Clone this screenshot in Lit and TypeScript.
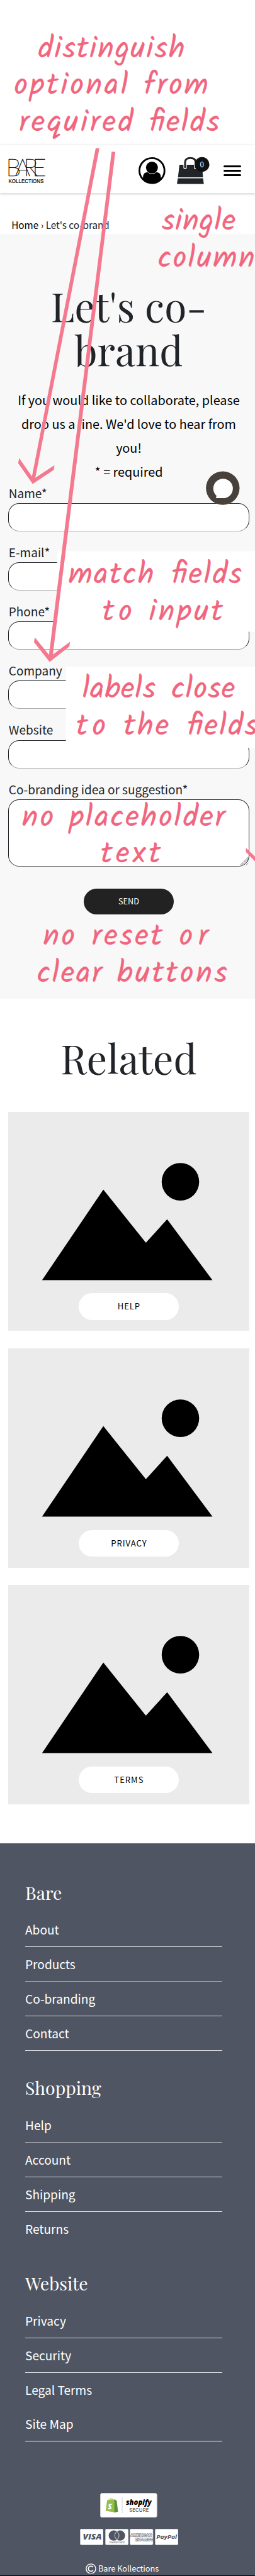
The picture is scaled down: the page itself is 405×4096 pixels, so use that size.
import { LitElement, html, svg, css } from "lit";
import { customElement, property } from "lit/decorators.js";

type Word = [string, number, number];

const NOTES: { y: number; words: Word[] }[] = [
  { y: 103, words: [["distinguish", 69, 261]] },
  { y: 169, words: [["optional", 26, 203], ["from", 258, 114]] },
  { y: 235, words: [["required", 35, 203], ["fields", 267, 125]] },
  { y: 412, words: [["single", 290, 131]] },
  { y: 478, words: [["column", 283, 172]] },
  { y: 1044, words: [["match", 123, 152], ["fields", 307, 125]] },
  { y: 1110, words: [["to", 184, 52], ["input", 267, 131]] },
  { y: 1249, words: [["labels", 148, 130], ["close", 307, 113]] },
  { y: 1315, words: [["to", 137, 52], ["the", 222, 80], ["fields", 335, 125]] },
  { y: 1478, words: [["no", 40, 56], ["placeholder", 125, 277]] },
  { y: 1543, words: [["text", 181, 106]] },
  { y: 1691, words: [["no", 78, 56], ["reset", 165, 125], ["or", 321, 51]] },
  { y: 1757, words: [["clear", 67, 115], ["buttons", 210, 196]] },
];

@customElement("site-header")
export class SiteHeader extends LitElement {
  static styles = css`
    :host { display: block; background: #fff; box-shadow: 0 1px 5px rgba(0, 0, 0, 0.22); position: relative; }
    .bar { display: flex; align-items: flex-start; height: 85px; box-sizing: border-box; padding: 20px 0 0 15px; }
    .account { margin-left: 168px; }
    .bag { margin-left: 21px; }
    .menu { margin: 16px 0 0 23px; display: grid; gap: 5px; width: 32px; }
    .menu i { height: 3px; border-radius: 2px; background: #000; }
    svg { display: block; overflow: visible; }
    .mark { font-family: Lato, sans-serif; font-weight: 100; font-size: 43px; stroke: #000; stroke-width: 0.5px; }
    .name { font-family: "Liberation Sans", sans-serif; font-size: 9.6px; stroke: #000; stroke-width: 0.2px; }
    .count { font-family: "Noto Sans CJK SC", sans-serif; font-size: 13px; fill: #fff; }
  `;
  render() {
    return html`<div class="bar">
      <svg width="64" height="50" viewBox="0 0 64 50">
        <text class="mark" x="-4 12 27.5 43" y="34.6">BARE</text>
        <text class="name" x="0.5" y="47.6" textLength="63" lengthAdjust="spacingAndGlyphs">KOLLECTIONS</text>
      </svg>
      <svg class="account" width="48" height="50" viewBox="0 0 48 50">
        <defs><clipPath id="ring"><circle cx="24" cy="25" r="23" /></clipPath></defs>
        <circle cx="24" cy="25" r="22.4" fill="#fff" stroke="#000" stroke-width="3.2" />
        <circle cx="24" cy="19.7" r="10.6" />
        <path clip-path="url(#ring)" d="M8 38C8 30 12 28 16.500 28.200Q24 35 31.500 28.200C36 28 40 30 40 38V49H8Z" />
      </svg>
      <svg class="bag" width="60" height="50" viewBox="0 0 60 50">
        <path d="M4.500 14.500H45L46.500 37H1.900Z" fill="#212529" />
        <path d="M1.700 38.800H46.700L48 48Q48 49 47 49H1Q0 49 .1 48Z" fill="#212529" />
        <path d="M14.600 19.500V10.500Q14.600 2.600 24 2.600T33.400 10.500V19.500" fill="none" stroke="#fff" stroke-width="6" stroke-linecap="round" />
        <path d="M14.600 19V10.500Q14.600 2.600 24 2.600T33.400 10.500V19" fill="none" stroke="#212529" stroke-width="3.400" stroke-linecap="round" />
        <circle cx="44.800" cy="14" r="13.200" fill="#111" />
        <text class="count" x="44.800" y="18.800" text-anchor="middle">0</text>
      </svg>
      <div class="menu"><i></i><i></i><i></i></div>
    </div>`;
  }
}

@customElement("form-field")
export class FormField extends LitElement {
  @property() label = "";
  @property({ type: Boolean }) multiline = false;
  static styles = css`
    :host { display: block; height: 106px; }
    .label { display: block; font-size: 21.400px; line-height: 32px; margin-bottom: 2px; padding-left: 0.500px; color: #212529; white-space: nowrap; }
    .box { display: block; box-sizing: border-box; width: 430px; height: 50.5px; margin: 0; border: 1px solid #212529; border-bottom-color: #aaa; border-radius: 20px; background: #fff; }
    .tall { height: 120px; border-bottom: 1px solid #666; }
    .wrap { display: grid; }
    .wrap > * { grid-area: 1 / 1; }
    .grip { justify-self: end; align-self: end; }
  `;
  render() {
    return html`<label class="label">${this.label}</label>
      <div class="wrap">
        <div class="box ${this.multiline ? "tall" : ""}"></div>
        ${this.multiline
          ? html`<svg class="grip" width="17" height="17" viewBox="0 0 17 17">
              <path d="M1 15L14.500 1.500M3 15.500L15 3.500M7 15.500L15 7.500M11 15.500L15 11.500" stroke="#555" stroke-width=".9" stroke-dasharray="6 .6" />
            </svg>`
          : null}
      </div>`;
  }
}

@customElement("picture-card")
export class PictureCard extends LitElement {
  @property() label = "";
  static styles = css`
    :host { display: grid; width: 430px; height: 392.500px; background: #ebebeb; }
    .art, .pill { grid-area: 1 / 1; }
    .art { width: 430px; height: 392px; }
    .pill { margin: 325px 0 0 126px; width: 179px; height: 48px; border-radius: 24px; background: #fff; color: #000; text-align: center; font-size: 14.700px; line-height: 47px; letter-spacing: 1.100px; }
  `;
  render() {
    return html`<svg class="art" viewBox="0 0 430 392">
        <circle cx="307.700" cy="125" r="33.500" />
        <path d="M60.500 301L170 139L246 234L284 192L365 301Z" />
      </svg>
      <div class="pill">${this.label}</div>`;
  }
}

const GROUPS: { title: string; links: [string, number][] }[] = [
  { title: "Bare", links: [["About", 1], ["Products", 0.5], ["Co-branding", 0.8], ["Contact", 0.8]] },
  { title: "Shopping", links: [["Help", 0.5], ["Account", 0.8], ["Shipping", 0.8], ["Returns", 0]] },
  { title: "Website", links: [["Privacy", 0.8], ["Security", 0.8], ["Legal Terms", 0], ["Site Map", 1]] },
];

@customElement("site-footer")
export class SiteFooter extends LitElement {
  static styles = css`
    :host { display: block; box-sizing: border-box; height: 1310px; padding: 65px 0 0 45px; background: #4f5562; color: #fff; border-bottom: 1.200px solid #000; }
    .group { height: 349.500px; }
    .title { margin: 0; font: 400 32px/46.600px "Playfair Display", "Liberation Serif", serif; height: 72px; }
    .link { box-sizing: border-box; width: 352px; height: 61.700px; padding-top: 3px; font-size: 21.500px; line-height: 30px; }
    .rule { height: 1px; margin-top: 15px; background: #fff; }
    .seal { display: block; margin: 48px 0 21px 134px; }
    .pay { display: flex; gap: 2.500px; margin-left: 98px; }
    .copy { display: flex; align-items: center; margin: 29.500px 0 0 108px; font-size: 14.300px; line-height: 24px; gap: 3.500px; white-space: nowrap; }
    .shop { font: italic 800 14px "Open Sans", sans-serif; }
    .sec { font: 500 8.500px Inter, sans-serif; fill: #555; }
    .visa { font: italic 800 14px "Open Sans", sans-serif; fill: #4f5562; }
    .mc { font: 5px Inter, sans-serif; fill: #4f5562; }
    .amex { font: 800 7px "Liberation Sans", sans-serif; fill: #fff; stroke: #4f5562; stroke-width: 1.200px; paint-order: stroke; }
    .pp { font: italic 700 9.500px "Open Sans", sans-serif; fill: #4f5562; }
    .ess { font: italic 800 13px "Open Sans", sans-serif; fill: #fff; }
    svg { display: block; }
  `;
  render() {
    const card = (inner: unknown) => html`<svg width="42" height="29" viewBox="0 0 42 29">
      <rect x=".4" y=".4" width="41.200" height="28.200" rx="2" fill="#fff" stroke="#c5c8cd" stroke-width=".8" />${inner}</svg>`;
    return html`
      ${GROUPS.map(
        (g) => html`<div class="group">
          <h3 class="title">${g.title}</h3>
          ${g.links.map(([t, o]) => html`<div class="link">${t}<div class="rule" style="opacity:${o}"></div></div>`)}
        </div>`
      )}
      <svg class="seal" width="102" height="44" viewBox="0 0 102 44">
        <rect x=".5" y=".5" width="101" height="43" rx="3" fill="#fff" stroke="#d3d3d0" />
        <path d="M12.500 13L27 11.500L28 35L10 32Z" fill="#95bf47" />
        <path d="M25.500 11.500L29.500 13.500L32 33.500L25.500 35Z" fill="#5e8e3e" />
        <path d="M15 14Q16 9.500 20 10.500T23 13.500M18.500 13Q20 9 22 10.500" fill="none" stroke="#95bf47" stroke-width="1.200" />
        <text class="ess" x="13.800" y="29.500">S</text>
        <path d="M39.500 8V36" stroke="#ccc" />
        <text class="shop" x="46" y="21" textLength="46" lengthAdjust="spacingAndGlyphs">shopify</text>
        <text class="sec" x="52" y="34" textLength="35">SECURE</text>
      </svg>
      <div class="pay">
        ${card(svg`<text class="visa" x="5" y="19.500" textLength="34" lengthAdjust="spacingAndGlyphs">VISA</text>`)}
        ${card(svg`<circle cx="15.500" cy="12" r="9.200" fill="#4f5562"/><circle cx="26.500" cy="12" r="9.200" fill="#4f5562"/><path d="M21 4.600A9.200 9.200 0 0 1 21 19.400A9.200 9.200 0 0 1 21 4.600Z" fill="#4f5562" stroke="#fff" stroke-width=".9"/><text class="mc" x="7.500" y="26" textLength="27">mastercard</text>`)}
        ${card(svg`<text class="amex" x="1.500" y="13" textLength="38" lengthAdjust="spacingAndGlyphs">AMERICAN</text><text class="amex" x="9.500" y="21.500" textLength="32" lengthAdjust="spacingAndGlyphs">EXPRESS</text>`)}
        ${card(svg`<text class="pp" x="2.500" y="17.500" textLength="37" lengthAdjust="spacingAndGlyphs">PayPal</text>`)}
      </div>
      <div class="copy">
        <svg width="19" height="19" viewBox="0 0 19 19"><circle cx="9.500" cy="9.500" r="8.500" fill="none" stroke="#fff" stroke-width="1.600" /><path d="M13.200 6.800A4.600 4.600 0 1 0 13.200 12.200" fill="none" stroke="#fff" stroke-width="1.900" /></svg>
        <span>Bare Kollections</span>
      </div>`;
  }
}

@customElement("app-root")
export class AppRoot extends LitElement {
  static styles = css`
    :host { display: block; width: 405px; height: 4096px; overflow: hidden; background: #fff; }
    .page { position: relative; width: 456px; height: 4607px; zoom: 0.889; overflow: hidden; background: #fff; font-family: "Noto Sans CJK SC", "Noto Sans", sans-serif; color: #212529; }
    .top { height: 260px; }
    .crumbs { display: flex; align-items: flex-end; height: 73px; box-sizing: border-box; padding: 0 0 1.500px 20.500px; font-size: 17.200px; line-height: 30px; white-space: pre; }
    .crumbs b { font-weight: 400; color: #000; }
    .section { box-sizing: border-box; height: 1368px; padding: 89px 11px 0 15px; background: #f8f8f8; }
    .heading { margin: 0; font: 400 72px/79.300px "Playfair Display", "Liberation Serif", serif; text-align: center; }
    .intro { margin: 28.500px 0 1px; font-size: 22.300px; line-height: 42.650px; text-align: center; color: #000; white-space: nowrap; }
    .send { margin: 194px auto 0; width: 160px; height: 46px; border-radius: 23px; background: #222; color: #fff; font-size: 14.300px; line-height: 45.500px; text-align: center; }
    .related { box-sizing: border-box; height: 1511px; padding: 67px 11px 0 15px; }
    .related .heading { margin-bottom: 56px; }
    .cards { display: grid; gap: 30.500px; }
    .overlay { position: absolute; left: 0; top: 0; pointer-events: none; }
    .note { font-family: Kalam, "Open Sans", sans-serif; font-size: 54px; fill: #f1667e; stroke: #f1667e; stroke-width: 0.300px; stroke-linejoin: round; }
  `;
  render() {
    return html`<div class="page">
      <div class="top"></div>
      <site-header></site-header>
      <div class="crumbs"><b>Home</b> › Let's co-brand</div>
      <section class="section">
        <h1 class="heading">Let's co-<br />brand</h1>
        <p class="intro">If you would like to collaborate, please<br />drop us a line. We'd love to hear from<br />you!<br />* = required</p>
        ${["Name*", "E-mail*", "Phone*", "Company", "Website"].map((l) => html`<form-field .label=${l}></form-field>`)}
        <form-field label="Co-branding idea or suggestion*" multiline style="height:0"></form-field>
        <div class="send">SEND</div>
      </section>
      <section class="related">
        <h2 class="heading">Related</h2>
        <div class="cards">
          ${["HELP", "PRIVACY", "TERMS"].map((l) => html`<picture-card .label=${l}></picture-card>`)}
        </div>
      </section>
      <site-footer></site-footer>
      <svg class="overlay" width="456" height="1800" viewBox="0 0 456 1800">
        <rect x="102" y="986" width="354" height="144" fill="#fff" />
        <rect x="117.700" y="1192.700" width="338.300" height="145.300" fill="#fff" />
        <circle cx="398" cy="873" r="30" fill="#48403a" />
        <path d="M385.500 891L387 887A17.500 17.500 0 1 1 402 891Z" fill="#fff" />
        <g fill="#f4788e">
          <path d="M171 264.500L177.500 265.700L63 855L57 853Z" />
          <path d="M34.300 819.500L32.500 828.500L58.300 865.500L96 840.500L97.300 832L63 854.500L57 852Z" />
          <path d="M199.500 271L206 271.800L94.200 1172L87.400 1172Z" />
          <path d="M62.300 1140L60.700 1148.500L88.700 1184L124 1156.500L125 1148L94.200 1171L87.300 1171Z" />
          <path d="M439.300 1516.300V1524L456 1541V1532.500Z" />
        </g>
        ${NOTES.map((n) =>
          n.words.map(([w, x, len]) => svg`<text class="note" x=${x - 1} y=${n.y} textLength=${len + 1}>${w}</text>`)
        )}
      </svg>
    </div>`;
  }
}
